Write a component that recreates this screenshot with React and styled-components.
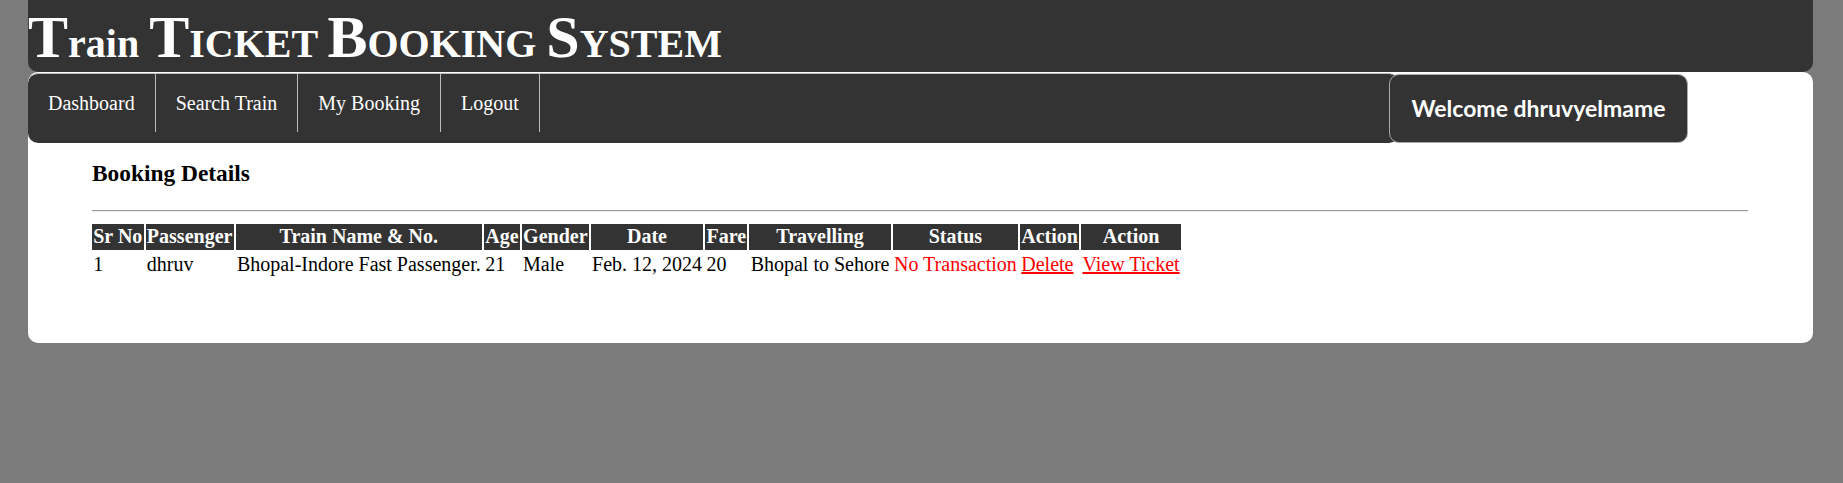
import styled, { createGlobalStyle } from 'styled-components';

const GlobalStyle = createGlobalStyle`
  html, body {
    margin: 0;
    padding: 0;
    background-color: #7b7b7b;
  }

  body {
    font-family: "Liberation Serif", "Times New Roman", serif;
    font-size: 20px;
  }
`;

const darkColor = '#333';
const linkColor = '#ff0000';

const Page = styled.div`
  margin: 0 30px 0 28px;
`;

const Header = styled.header`
  padding-top: 3px;
  background-color: ${darkColor};
  border-radius: 0 0 10px 10px;
  color: #fff;
`;

const Title = styled.h1`
  margin: 0;
  font-size: 40px;
  font-weight: bold;
  line-height: normal;
`;

const BigLetter = styled.span`
  font-size: 60px;
`;

const SmallCaps = styled.span`
  text-transform: uppercase;
`;

const Card = styled.main`
  padding: 1px 0 64px;
  background-color: #fff;
  border-radius: 10px;
`;

const TopBar = styled.div`
  display: flex;
  align-items: flex-start;
`;

const NavList = styled.ul`
  flex: 1;
  display: flex;
  margin: 0;
  padding: 0 0 11px;
  list-style: none;
  background-color: ${darkColor};
  border-top: 1px solid #bbb;
  border-radius: 10px;
`;

const NavItem = styled.li`
  border-right: 1px solid #bbb;
`;

const NavLink = styled.a`
  display: block;
  padding: 17.5px 20px;
  color: #fff;
  font-size: 20px;
  line-height: 23px;
  text-decoration: none;
`;

const WelcomeBox = styled.div`
  box-sizing: border-box;
  display: flex;
  align-items: center;
  justify-content: center;
  width: 299px;
  height: 69px;
  margin: 1px 125px 0 -10px;
  padding-bottom: 2px;
  background-color: ${darkColor};
  border: 1px solid #a9a9a9;
  border-radius: 10px;

  color: #fff;
  font-family: "Comic Sans MS", Lato, sans-serif;
  font-size: 23px;
  font-weight: bold;
`;

const Content = styled.section`
  padding: 0 65px 0 64px;
`;

const SectionTitle = styled.h3`
  margin: 17px 0 23px;
  font-size: 23.4px;
  line-height: normal;
`;

const Divider = styled.hr`
  margin: 0 0 10px;
  border: none;
  border-top: 1px solid #9a9a9a;
  border-bottom: 1px solid #eee;
`;

const BookingTable = styled.table`
  margin-left: -2px;
  border-spacing: 2.5px;
  font-size: 20px;
`;

const HeadCell = styled.th`
  padding: 1.25px;
  background-color: ${darkColor};
  color: #fff;
  line-height: 23px;
`;

const Cell = styled.td`
  padding: 1.25px;
  line-height: 23px;
  color: ${({ $red }) => ($red ? linkColor : '#000')};
`;

const ActionLink = styled.a`
  color: ${linkColor};
  text-decoration: underline;
`;

const navItems = ['Dashboard', 'Search Train', 'My Booking', 'Logout'];

const columns = [
  'Sr No',
  'Passenger',
  'Train Name & No.',
  'Age',
  'Gender',
  'Date',
  'Fare',
  'Travelling',
  'Status',
  'Action',
  'Action',
];

const bookings = [
  {
    id: 1,
    passenger: 'dhruv',
    train: 'Bhopal-Indore Fast Passenger.',
    age: 21,
    gender: 'Male',
    date: 'Feb. 12, 2024',
    fare: 20,
    travelling: 'Bhopal to Sehore',
    status: 'No Transaction',
  },
];

const TitleWord = ({ first, rest, caps }) => (
  <>
    <BigLetter>{first}</BigLetter>
    {caps ? <SmallCaps>{rest}</SmallCaps> : rest}
  </>
);

const App = () => (
  <>
    <GlobalStyle />
    <Page>
      <Header>
        <Title>
          <TitleWord first="T" rest="rain" />{' '}
          <TitleWord first="T" rest="icket" caps />{' '}
          <TitleWord first="B" rest="ooking" caps />{' '}
          <TitleWord first="S" rest="ystem" caps />
        </Title>
      </Header>
      <Card>
        <TopBar>
          <NavList>
            {navItems.map((item) => (
              <NavItem key={item}>
                <NavLink href="#">{item}</NavLink>
              </NavItem>
            ))}
          </NavList>
          <WelcomeBox>Welcome dhruvyelmame</WelcomeBox>
        </TopBar>
        <Content>
          <SectionTitle>Booking Details</SectionTitle>
          <Divider />
          <BookingTable>
            <thead>
              <tr>
                {columns.map((column, index) => (
                  <HeadCell key={index}>{column}</HeadCell>
                ))}
              </tr>
            </thead>
            <tbody>
              {bookings.map((booking) => (
                <tr key={booking.id}>
                  <Cell>{booking.id}</Cell>
                  <Cell>{booking.passenger}</Cell>
                  <Cell>{booking.train}</Cell>
                  <Cell>{booking.age}</Cell>
                  <Cell>{booking.gender}</Cell>
                  <Cell>{booking.date}</Cell>
                  <Cell>{booking.fare}</Cell>
                  <Cell>{booking.travelling}</Cell>
                  <Cell $red>{booking.status}</Cell>
                  <Cell>
                    <ActionLink href="#">Delete</ActionLink>
                  </Cell>
                  <Cell>
                    {' '}
                    <ActionLink href="#">View Ticket</ActionLink>
                  </Cell>
                </tr>
              ))}
            </tbody>
          </BookingTable>
        </Content>
      </Card>
    </Page>
  </>
);

export default App;
